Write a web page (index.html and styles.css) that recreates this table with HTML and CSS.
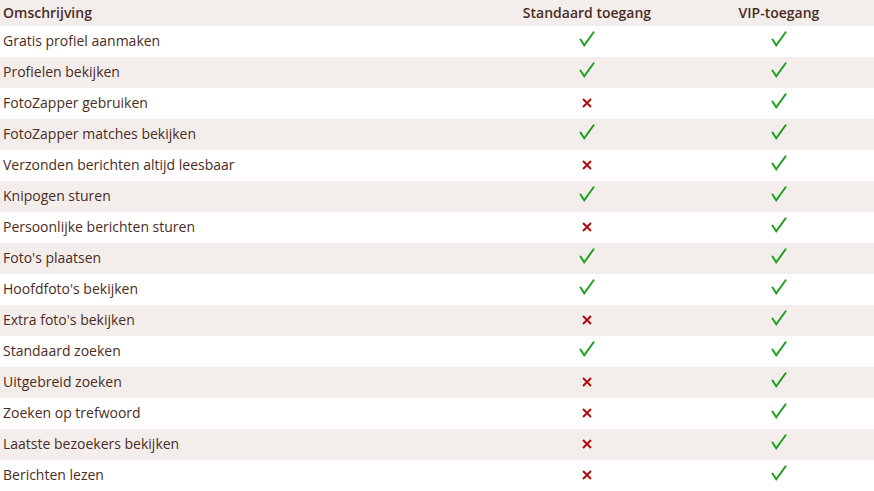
FILE: index.html
```html
<!DOCTYPE html>
<html lang="nl">
<head>
<meta charset="utf-8">
<title>Vergelijking</title>
<link rel="stylesheet" href="styles.css">
</head>
<body>
<div class="table">
  <div class="row head">
    <div class="cell desc">Omschrijving</div>
    <div class="cell mid">Standaard toegang</div>
    <div class="cell mid">VIP-toegang</div>
  </div>
  <div class="row"><div class="cell desc">Gratis profiel aanmaken</div><div class="cell mid"><svg class="ok" viewBox="0 0 16 16"><path d="M1.5 8.6 L5.2 14.3 L14.6 1.3"/></svg></div><div class="cell mid"><svg class="ok" viewBox="0 0 16 16"><path d="M1.5 8.6 L5.2 14.3 L14.6 1.3"/></svg></div></div>
  <div class="row alt"><div class="cell desc">Profielen bekijken</div><div class="cell mid"><svg class="ok" viewBox="0 0 16 16"><path d="M1.5 8.6 L5.2 14.3 L14.6 1.3"/></svg></div><div class="cell mid"><svg class="ok" viewBox="0 0 16 16"><path d="M1.5 8.6 L5.2 14.3 L14.6 1.3"/></svg></div></div>
  <div class="row"><div class="cell desc">FotoZapper gebruiken</div><div class="cell mid"><svg class="no" viewBox="0 0 10 10"><path d="M1 1 L9 9 M9 1 L1 9"/></svg></div><div class="cell mid"><svg class="ok" viewBox="0 0 16 16"><path d="M1.5 8.6 L5.2 14.3 L14.6 1.3"/></svg></div></div>
  <div class="row alt"><div class="cell desc">FotoZapper matches bekijken</div><div class="cell mid"><svg class="ok" viewBox="0 0 16 16"><path d="M1.5 8.6 L5.2 14.3 L14.6 1.3"/></svg></div><div class="cell mid"><svg class="ok" viewBox="0 0 16 16"><path d="M1.5 8.6 L5.2 14.3 L14.6 1.3"/></svg></div></div>
  <div class="row"><div class="cell desc">Verzonden berichten altijd leesbaar</div><div class="cell mid"><svg class="no" viewBox="0 0 10 10"><path d="M1 1 L9 9 M9 1 L1 9"/></svg></div><div class="cell mid"><svg class="ok" viewBox="0 0 16 16"><path d="M1.5 8.6 L5.2 14.3 L14.6 1.3"/></svg></div></div>
  <div class="row alt"><div class="cell desc">Knipogen sturen</div><div class="cell mid"><svg class="ok" viewBox="0 0 16 16"><path d="M1.5 8.6 L5.2 14.3 L14.6 1.3"/></svg></div><div class="cell mid"><svg class="ok" viewBox="0 0 16 16"><path d="M1.5 8.6 L5.2 14.3 L14.6 1.3"/></svg></div></div>
  <div class="row"><div class="cell desc">Persoonlijke berichten sturen</div><div class="cell mid"><svg class="no" viewBox="0 0 10 10"><path d="M1 1 L9 9 M9 1 L1 9"/></svg></div><div class="cell mid"><svg class="ok" viewBox="0 0 16 16"><path d="M1.5 8.6 L5.2 14.3 L14.6 1.3"/></svg></div></div>
  <div class="row alt"><div class="cell desc">Foto's plaatsen</div><div class="cell mid"><svg class="ok" viewBox="0 0 16 16"><path d="M1.5 8.6 L5.2 14.3 L14.6 1.3"/></svg></div><div class="cell mid"><svg class="ok" viewBox="0 0 16 16"><path d="M1.5 8.6 L5.2 14.3 L14.6 1.3"/></svg></div></div>
  <div class="row"><div class="cell desc">Hoofdfoto's bekijken</div><div class="cell mid"><svg class="ok" viewBox="0 0 16 16"><path d="M1.5 8.6 L5.2 14.3 L14.6 1.3"/></svg></div><div class="cell mid"><svg class="ok" viewBox="0 0 16 16"><path d="M1.5 8.6 L5.2 14.3 L14.6 1.3"/></svg></div></div>
  <div class="row alt"><div class="cell desc">Extra foto's bekijken</div><div class="cell mid"><svg class="no" viewBox="0 0 10 10"><path d="M1 1 L9 9 M9 1 L1 9"/></svg></div><div class="cell mid"><svg class="ok" viewBox="0 0 16 16"><path d="M1.5 8.6 L5.2 14.3 L14.6 1.3"/></svg></div></div>
  <div class="row"><div class="cell desc">Standaard zoeken</div><div class="cell mid"><svg class="ok" viewBox="0 0 16 16"><path d="M1.5 8.6 L5.2 14.3 L14.6 1.3"/></svg></div><div class="cell mid"><svg class="ok" viewBox="0 0 16 16"><path d="M1.5 8.6 L5.2 14.3 L14.6 1.3"/></svg></div></div>
  <div class="row alt"><div class="cell desc">Uitgebreid zoeken</div><div class="cell mid"><svg class="no" viewBox="0 0 10 10"><path d="M1 1 L9 9 M9 1 L1 9"/></svg></div><div class="cell mid"><svg class="ok" viewBox="0 0 16 16"><path d="M1.5 8.6 L5.2 14.3 L14.6 1.3"/></svg></div></div>
  <div class="row"><div class="cell desc">Zoeken op trefwoord</div><div class="cell mid"><svg class="no" viewBox="0 0 10 10"><path d="M1 1 L9 9 M9 1 L1 9"/></svg></div><div class="cell mid"><svg class="ok" viewBox="0 0 16 16"><path d="M1.5 8.6 L5.2 14.3 L14.6 1.3"/></svg></div></div>
  <div class="row alt"><div class="cell desc">Laatste bezoekers bekijken</div><div class="cell mid"><svg class="no" viewBox="0 0 10 10"><path d="M1 1 L9 9 M9 1 L1 9"/></svg></div><div class="cell mid"><svg class="ok" viewBox="0 0 16 16"><path d="M1.5 8.6 L5.2 14.3 L14.6 1.3"/></svg></div></div>
  <div class="row"><div class="cell desc">Berichten lezen</div><div class="cell mid"><svg class="no" viewBox="0 0 10 10"><path d="M1 1 L9 9 M9 1 L1 9"/></svg></div><div class="cell mid"><svg class="ok" viewBox="0 0 16 16"><path d="M1.5 8.6 L5.2 14.3 L14.6 1.3"/></svg></div></div>
</div>
</body>
</html>
```

FILE: styles.css
```css
html, body {
  margin: 0;
  padding: 0;
  background: #ffffff;
}
body {
  font-family: "Open Sans", "Noto Sans", sans-serif;
  font-size: 14px;
  color: #4a2c24;
}
.table {
  display: flex;
  flex-direction: column;
  width: 874px;
}
.row {
  display: grid;
  grid-template-columns: 490px 194px 190px;
  height: 31px;
  box-sizing: border-box;
  padding-bottom: 2px;
  align-items: center;
}
.row.head {
  height: 26px;
  background: #f3eeeb;
  font-weight: 600;
}
.row.alt {
  background: #f3eeeb;
}
.cell.desc {
  padding-left: 3px;
}
.cell.mid {
  display: flex;
  justify-content: center;
  align-items: center;
}
.ok {
  width: 16px;
  height: 16px;
  margin-bottom: 3px;
  fill: none;
  stroke: #17a017;
  stroke-width: 1.9;
  stroke-linecap: round;
  stroke-linejoin: miter;
}
.no {
  width: 10px;
  height: 10px;
  fill: none;
  stroke: #b30a0a;
  stroke-width: 2;
}
```
